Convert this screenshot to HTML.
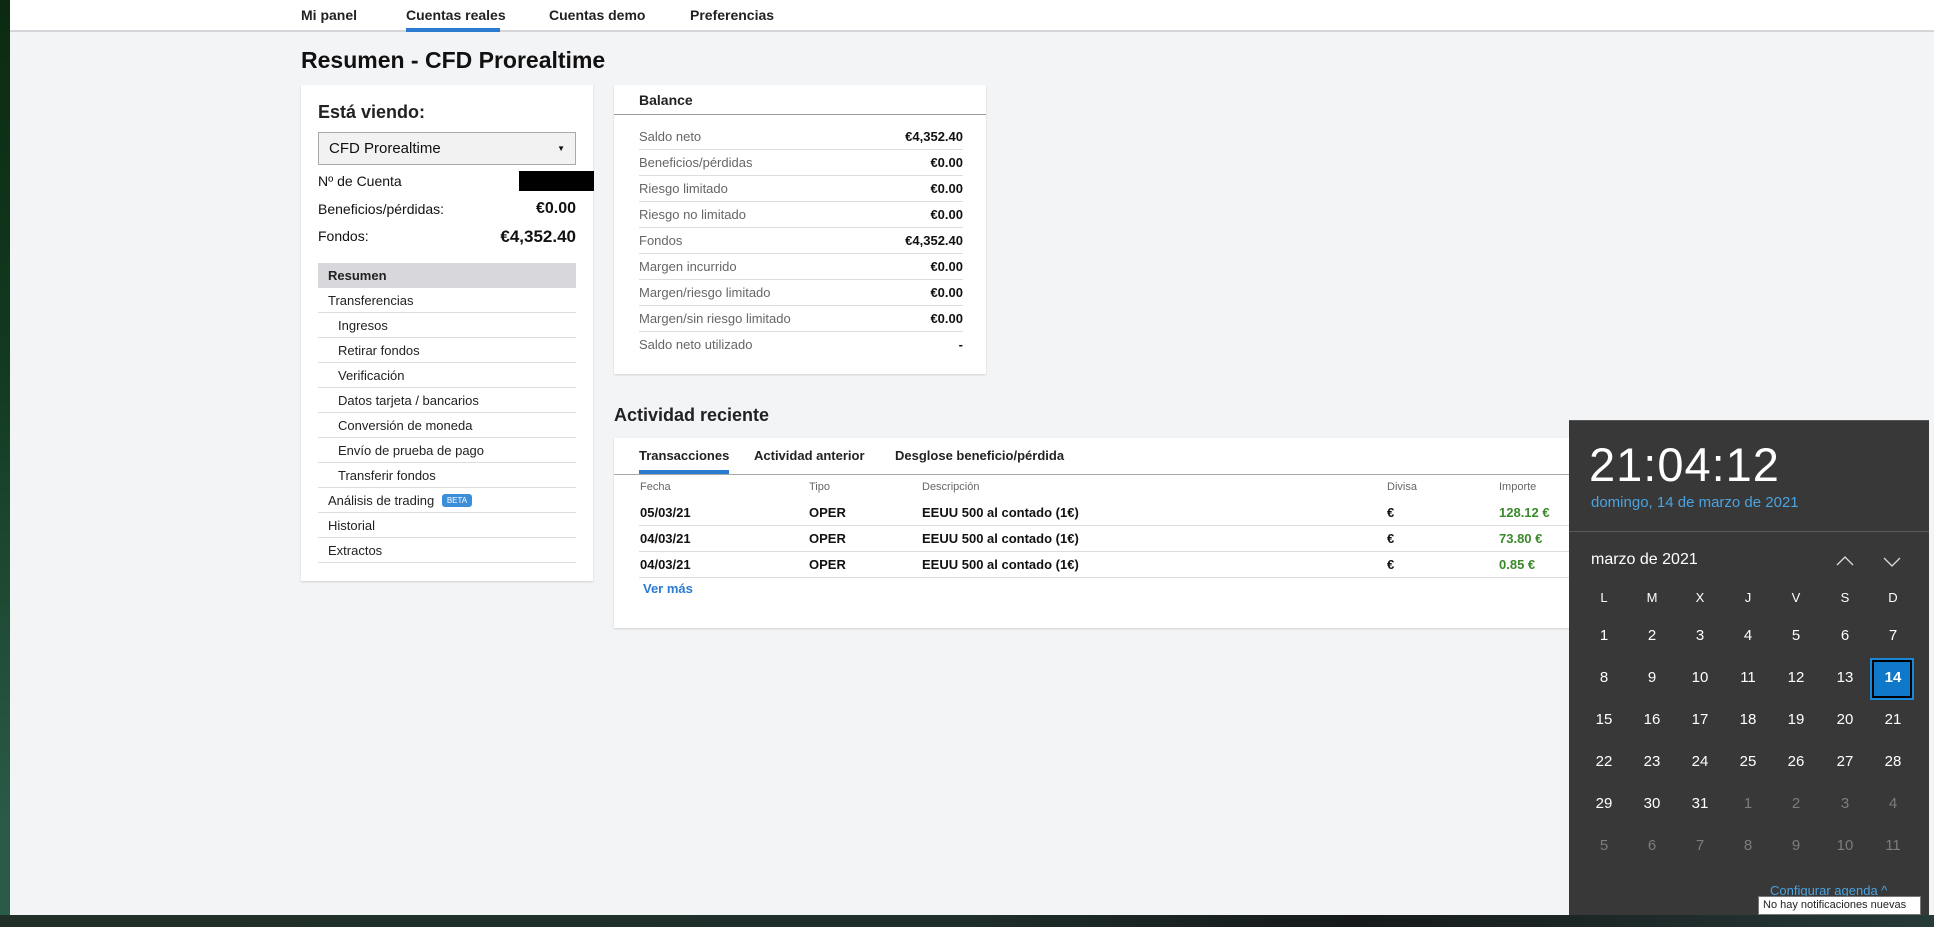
<!DOCTYPE html>
<html><head><meta charset="utf-8"><style>
*{margin:0;padding:0;box-sizing:border-box}
body{width:1934px;height:927px;overflow:hidden;background:#f3f4f6;font-family:"Liberation Sans",sans-serif;color:#111;position:relative}
.a{position:absolute;white-space:nowrap}
.nav{position:absolute;left:0;top:0;width:1934px;height:32px;background:#fff;border-bottom:2px solid #d3d5d8}
.nav span{position:absolute;top:7px;font-size:14px;font-weight:bold;color:#222}
.card{position:absolute;background:#fff;box-shadow:0 1px 2px rgba(0,0,0,.15)}
.lrow{position:absolute;left:318px;width:258px;height:25px;border-bottom:1px solid #ddd;font-size:13px;line-height:25px;color:#222}
.brow{position:absolute;left:639px;width:324px;height:26px;border-bottom:1px solid #ddd;font-size:13px;line-height:26px;color:#666}
.brow b{position:absolute;right:0;color:#111}
.cal{position:absolute;left:1569px;top:420px;width:360px;height:495px;background:#383838;border-top:1px solid #555}
.d{position:absolute;width:40px;text-align:center;font-size:15px;color:#fff;font-family:"Liberation Sans",sans-serif}
.g{color:#7d7d7d}
.tb{font-weight:bold}
</style></head><body>
<div class="a" style="left:0;top:0;width:10px;height:915px;background:linear-gradient(#0c2a12,#123a20 40%,#2a5a48 90%)"></div>
<div class="nav" style="left:10px;width:1924px">
<span style="left:291px">Mi panel</span>
<span style="left:396px">Cuentas reales</span>
<span style="left:539px">Cuentas demo</span>
<span style="left:680px">Preferencias</span>
<div class="a" style="left:396px;top:28px;width:94px;height:4px;background:#2b7bd1"></div>
</div>
<div class="a" style="left:301px;top:47px;font-size:23px;font-weight:bold">Resumen - CFD Prorealtime</div>

<div class="card" style="left:301px;top:85px;width:292px;height:496px"></div>
<div class="a" style="left:318px;top:102px;font-size:18px;font-weight:bold;color:#222">Está viendo:</div>
<div class="a" style="left:318px;top:132px;width:258px;height:33px;background:#f2f2f2;border:1px solid #aaa;font-size:15px;line-height:31px;padding-left:10px">CFD Prorealtime<span style="position:absolute;right:10px;font-size:8px">▼</span></div>
<div class="a" style="left:318px;top:173px;font-size:14px">Nº de Cuenta</div>
<div class="a" style="left:519px;top:171px;width:75px;height:20px;background:#000"></div>
<div class="a" style="left:318px;top:201px;font-size:14px">Beneficios/pérdidas:</div>
<div class="a" style="left:318px;top:200px;width:258px;text-align:right;font-size:16px;font-weight:bold">€0.00</div>
<div class="a" style="left:318px;top:228px;font-size:14px">Fondos:</div>
<div class="a" style="left:318px;top:227px;width:258px;text-align:right;font-size:17px;font-weight:bold">€4,352.40</div>
<div class="lrow" style="top:263px;background:#d8d8dc;padding-left:10px;border:none;font-weight:bold">Resumen</div>
<div class="lrow" style="top:288px;padding-left:10px">Transferencias</div>
<div class="lrow" style="top:313px;padding-left:20px">Ingresos</div>
<div class="lrow" style="top:338px;padding-left:20px">Retirar fondos</div>
<div class="lrow" style="top:363px;padding-left:20px">Verificación</div>
<div class="lrow" style="top:388px;padding-left:20px">Datos tarjeta / bancarios</div>
<div class="lrow" style="top:413px;padding-left:20px">Conversión de moneda</div>
<div class="lrow" style="top:438px;padding-left:20px">Envío de prueba de pago</div>
<div class="lrow" style="top:463px;padding-left:20px">Transferir fondos</div>
<div class="lrow" style="top:488px;padding-left:10px">Análisis de trading <span style="display:inline-block;background:#3d8ed8;color:#fff;font-size:8px;line-height:13px;padding:0 5px;border-radius:3px;vertical-align:2px;margin-left:4px">BETA</span></div>
<div class="lrow" style="top:513px;padding-left:10px">Historial</div>
<div class="lrow" style="top:538px;padding-left:10px">Extractos</div>

<div class="card" style="left:614px;top:85px;width:372px;height:289px"></div>
<div class="a" style="left:639px;top:92px;font-size:14px;font-weight:bold;color:#222">Balance</div>
<div class="a" style="left:614px;top:114px;width:372px;height:1px;background:#999"></div>
<div class="brow" style="top:124px">Saldo neto<b>€4,352.40</b></div>
<div class="brow" style="top:150px">Beneficios/pérdidas<b>€0.00</b></div>
<div class="brow" style="top:176px">Riesgo limitado<b>€0.00</b></div>
<div class="brow" style="top:202px">Riesgo no limitado<b>€0.00</b></div>
<div class="brow" style="top:228px">Fondos<b>€4,352.40</b></div>
<div class="brow" style="top:254px">Margen incurrido<b>€0.00</b></div>
<div class="brow" style="top:280px">Margen/riesgo limitado<b>€0.00</b></div>
<div class="brow" style="top:306px">Margen/sin riesgo limitado<b>€0.00</b></div>
<div class="brow" style="top:332px;border:none">Saldo neto utilizado<b>-</b></div>

<div class="a" style="left:614px;top:405px;font-size:18px;font-weight:bold;color:#222">Actividad reciente</div>
<div class="card" style="left:614px;top:438px;width:960px;height:190px"></div>
<div class="a" style="left:639px;top:448px;font-size:13px;font-weight:bold;color:#222">Transacciones</div>
<div class="a" style="left:754px;top:448px;font-size:13px;font-weight:bold;color:#222">Actividad anterior</div>
<div class="a" style="left:895px;top:448px;font-size:13px;font-weight:bold;color:#222">Desglose beneficio/pérdida</div>
<div class="a" style="left:639px;top:470px;width:90px;height:4px;background:#2b7bd1"></div>
<div class="a" style="left:614px;top:474px;width:960px;height:1px;background:#aaa"></div>
<div style="font-size:11px;color:#666">
<div class="a" style="left:640px;top:481px">Fecha</div><div class="a" style="left:809px;top:481px">Tipo</div><div class="a" style="left:922px;top:481px">Descripción</div><div class="a" style="left:1387px;top:481px">Divisa</div><div class="a" style="left:1499px;top:481px">Importe</div>
</div>
<div style="font-size:13px" class="tb">
<div class="a" style="left:640px;top:505px">05/03/21</div><div class="a" style="left:809px;top:505px">OPER</div><div class="a" style="left:922px;top:505px">EEUU 500 al contado (1€)</div><div class="a" style="left:1387px;top:505px">€</div><div class="a" style="left:1499px;top:505px;color:#3a8a2a">128.12 €</div>
<div class="a" style="left:640px;top:531px">04/03/21</div><div class="a" style="left:809px;top:531px">OPER</div><div class="a" style="left:922px;top:531px">EEUU 500 al contado (1€)</div><div class="a" style="left:1387px;top:531px">€</div><div class="a" style="left:1499px;top:531px;color:#3a8a2a">73.80 €</div>
<div class="a" style="left:640px;top:557px">04/03/21</div><div class="a" style="left:809px;top:557px">OPER</div><div class="a" style="left:922px;top:557px">EEUU 500 al contado (1€)</div><div class="a" style="left:1387px;top:557px">€</div><div class="a" style="left:1499px;top:557px;color:#3a8a2a">0.85 €</div>
</div>
<div class="a" style="left:639px;top:525px;width:930px;height:1px;background:#ddd"></div>
<div class="a" style="left:639px;top:551px;width:930px;height:1px;background:#ddd"></div>
<div class="a" style="left:639px;top:577px;width:930px;height:1px;background:#ddd"></div>
<div class="a" style="left:643px;top:581px;font-size:13px;font-weight:bold;color:#2b7bd1">Ver más</div>

<div class="cal">
<div class="a" style="left:20px;top:16px;font-size:47px;font-weight:300;color:#fff;letter-spacing:1px">21:04:12</div>
<div class="a" style="left:22px;top:73px;font-size:15px;color:#4ba3e0">domingo, 14 de marzo de 2021</div>
<div class="a" style="left:0;top:110px;width:360px;height:1px;background:#5a5a5a"></div>
<div class="a" style="left:22px;top:130px;font-size:16px;color:#fff">marzo de 2021</div>
<svg class="a" style="left:265px;top:132px" width="80" height="16"><path d="M3 12 L11 4 L19 12" stroke="#ddd" stroke-width="1.3" fill="none"/><path d="M50 5 L58 13 L66 5" stroke="#ddd" stroke-width="1.3" fill="none"/></svg>
<div id="grid"></div>
<div class="a" style="left:301px;top:237px;width:44px;height:42px;border:2px solid #1a88d8;background:#000;padding:2px"><div style="width:100%;height:100%;background:#0f78c8"></div></div>
<div class="a" style="left:201px;top:462px;font-size:13px;color:#4ba3e0">Configurar agenda ^</div>
</div>
<div class="a" style="left:1758px;top:896px;width:163px;height:19px;background:#fff;border:1px solid #777;font-size:11px;line-height:17px;padding-left:4px;color:#222">No hay notificaciones nuevas</div>
<div class="a" style="left:0;top:915px;width:1934px;height:12px;background:linear-gradient(90deg,#203028,#1e2e2a 50%,#161a1a 70%,#263a38)"></div>
<script>
var g=document.getElementById('grid'),h='',cols=[15,63,111,159,207,256,304];
'LMXJVSD'.split('').forEach(function(c,i){h+='<div class="d" style="left:'+cols[i]+'px;top:169px;font-size:13px">'+c+'</div>'});
var days=[];for(var i=1;i<=31;i++)days.push([i,0]);for(i=1;i<=11;i++)days.push([i,1]);
days.forEach(function(d,k){var r=Math.floor(k/7),c=k%7;h+='<div class="d'+(d[1]?' g':'')+'" style="left:'+cols[c]+'px;top:'+(206+r*42)+'px'+(d[0]==14&&!d[1]?';z-index:2;font-weight:bold':'')+'">'+d[0]+'</div>'});
g.innerHTML=h;
</script>
</body></html>
